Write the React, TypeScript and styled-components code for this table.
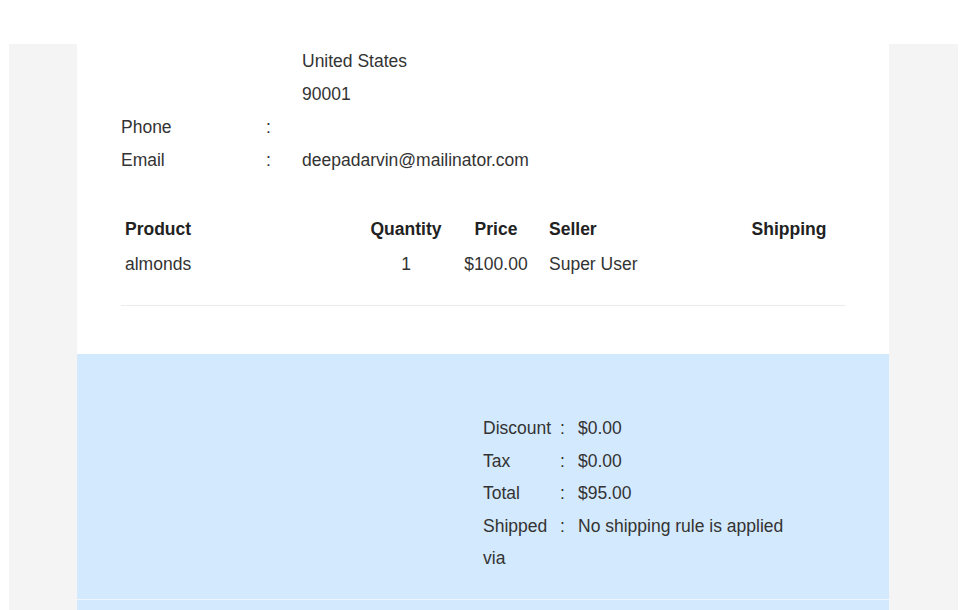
import React from "react";
import styled, { createGlobalStyle } from "styled-components";

const Global = createGlobalStyle`
  html, body { margin: 0; padding: 0; background: #ffffff; }
  body { font-family: Arial, "Liberation Sans", Helvetica, sans-serif; color: #333333; }
  * { box-sizing: border-box; }
`;

const Page = styled.div`
  padding: 44px 4px 0 9px;
  height: 610px;
  overflow: hidden;
`;

const Backdrop = styled.div`
  background: #f4f4f4;
  min-height: 566px;
  padding: 0 69px 0 68px;
`;

const Sheet = styled.div`
  background: #ffffff;
  width: 812px;
`;

const Details = styled.div`
  padding: 1px 43px 0 44px;
`;

const InfoRow = styled.div`
  display: grid;
  grid-template-columns: 145px 36px 1fr;
  height: 33px;
  align-items: center;
  font-size: 17.5px;
`;

const Cell = styled.span``;

const OrderTable = styled.div`
  margin-top: 35px;
  padding-bottom: 23px;
  border-bottom: 1px solid #ececec;
`;

const TRow = styled.div<{ $head?: boolean }>`
  display: grid;
  grid-template-columns: 244px 82px 98px 187px 114px;
  height: 35px;
  align-items: center;
  font-size: 17.5px;
  font-weight: ${(p) => (p.$head ? 700 : 400)};
  color: ${(p) => (p.$head ? "#222222" : "#333333")};
`;

const TCell = styled.div<{ $align?: "left" | "center" }>`
  padding: 0 4px;
  text-align: ${(p) => p.$align ?? "left"};
  white-space: nowrap;
`;

const Spacer = styled.div`
  height: 48px;
`;

const Summary = styled.div`
  background: #d3e9fd;
  padding: 58px 0 24px 406px;
  border-bottom: 1px solid #eef5fc;
`;

const SummaryBox = styled.div`
  width: 320px;
  font-size: 17.5px;
  line-height: 32.5px;
`;

const SumLine = styled.div``;

const SumLabel = styled.span`
  display: inline-block;
  width: 77px;
`;

const SumColon = styled.span`
  display: inline-block;
  width: 18px;
`;

const NextBand = styled.div`
  background: #d3e9fd;
  height: 40px;
`;

const info = [
  { label: "", colon: "", value: "United States" },
  { label: "", colon: "", value: "90001" },
  { label: "Phone", colon: ":", value: "" },
  { label: "Email", colon: ":", value: "deepadarvin@mailinator.com" },
];

const summary = [
  { label: "Discount", value: "$0.00" },
  { label: "Tax", value: "$0.00" },
  { label: "Total", value: "$95.00" },
  { label: "Shipped", value: "No shipping rule is applied via" },
];

export default function App() {
  return (
    <>
      <Global />
      <Page>
        <Backdrop>
          <Sheet>
            <Details>
              {info.map((r, i) => (
                <InfoRow key={i}>
                  <Cell>{r.label}</Cell>
                  <Cell>{r.colon}</Cell>
                  <Cell>{r.value}</Cell>
                </InfoRow>
              ))}
              <OrderTable>
                <TRow $head>
                  <TCell>Product</TCell>
                  <TCell $align="center">Quantity</TCell>
                  <TCell $align="center">Price</TCell>
                  <TCell>Seller</TCell>
                  <TCell $align="center">Shipping</TCell>
                </TRow>
                <TRow>
                  <TCell>almonds</TCell>
                  <TCell $align="center">1</TCell>
                  <TCell $align="center">$100.00</TCell>
                  <TCell>Super User</TCell>
                  <TCell $align="center"></TCell>
                </TRow>
              </OrderTable>
            </Details>
            <Spacer />
            <Summary>
              <SummaryBox>
                {summary.map((s) => (
                  <SumLine key={s.label}>
                    <SumLabel>{s.label}</SumLabel>
                    <SumColon>:</SumColon>
                    {s.value}
                  </SumLine>
                ))}
              </SummaryBox>
            </Summary>
            <NextBand />
          </Sheet>
        </Backdrop>
      </Page>
    </>
  );
}
